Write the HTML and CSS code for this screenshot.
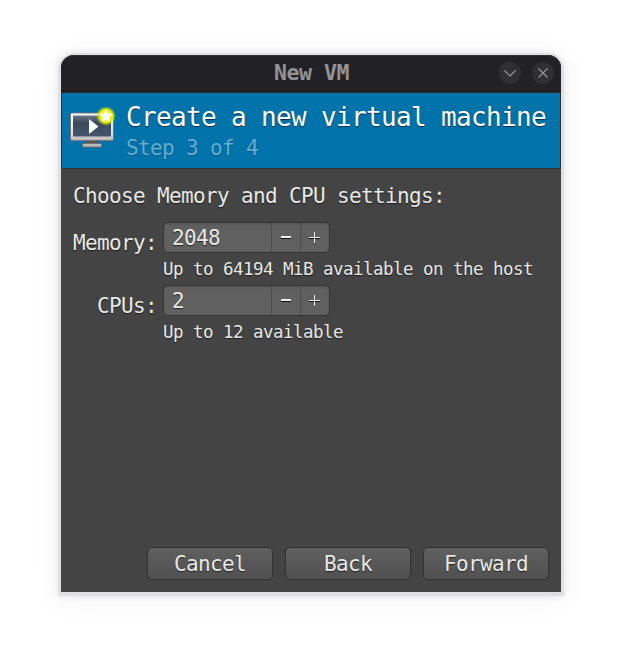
FILE: index.html
```html
<!DOCTYPE html>
<html lang="en">
<head>
<meta charset="utf-8">
<title>New VM</title>
<link rel="stylesheet" href="styles.css">
</head>
<body>
<main class="window">
  <header class="titlebar">
    <h1 class="window-title">New VM</h1>
    <div class="controls">
      <button class="control" aria-label="Minimize"><svg viewBox="0 0 22 22"><path d="M5.5 8.500 11 14l5.500-5.500"/></svg></button>
      <button class="control" aria-label="Close"><svg viewBox="0 0 22 22"><path d="m6.500 6.500 9 9m0-9-9 9"/></svg></button>
    </div>
  </header>
  <section class="banner">
    <svg class="vm-icon" viewBox="0 0 48 48">
      <defs>
        <linearGradient id="screen" x1="0" y1="0" x2="0" y2="1"><stop offset="0" stop-color="#6b7786"/><stop offset=".35" stop-color="#3b485b"/><stop offset="1" stop-color="#46546b"/></linearGradient>
        <linearGradient id="bezel" x1="0" y1="0" x2="0" y2="1"><stop offset="0" stop-color="#fff"/><stop offset=".8" stop-color="#ddd"/><stop offset="1" stop-color="#b5b5b5"/></linearGradient>
        <radialGradient id="glow"><stop offset="0" stop-color="#fffb50"/><stop offset=".65" stop-color="#e8f000"/><stop offset="1" stop-color="#c4e000" stop-opacity="0"/></radialGradient>
      </defs>
      <path d="M18 34h12v4H18z" fill="#555"/>
      <rect x="14.500" y="36.500" width="19" height="3.500" rx="1" fill="#bbb" stroke="#77706c"/>
      <rect x="2.500" y="6" width="43" height="27.500" rx="1.500" fill="url(#bezel)" stroke="#77777a"/>
      <rect x="5" y="8.500" width="38" height="21" fill="url(#screen)"/>
      <path d="M21 12v15l9.500-7.500z" fill="#fff"/>
      <circle cx="38" cy="9" r="10" fill="url(#glow)"/>
      <path d="m38 2 2 4.300 4.800.600-3.500 3.300.900 4.800-4.200-2.300-4.200 2.300.900-4.800-3.500-3.300 4.800-.600z" fill="#fff"/>
    </svg>
    <div>
      <h2 class="heading">Create a new virtual machine</h2>
      <p class="step">Step 3 of 4</p>
    </div>
  </section>
  <section class="content">
    <p class="prompt">Choose Memory and CPU settings:</p>
    <div class="fields">
      <label class="label">Memory:</label>
      <div class="spin"><span class="value">2048</span><button class="minus" aria-label="Decrease"><svg viewBox="0 0 28 29"><path class="shade" d="M9 15.500h10"/><path class="line thick" d="M9 14h10"/></svg></button><button aria-label="Increase"><svg viewBox="0 0 28 29"><path class="shade" d="M8 15.500h11m-5.500-5v10"/><path class="line" d="M8 14.500h11m-5.500-5.500v11"/></svg></button></div>
      <p class="hint">Up to 64194 MiB available on the host</p>
      <label class="label">CPUs:</label>
      <div class="spin"><span class="value">2</span><button class="minus" aria-label="Decrease"><svg viewBox="0 0 28 29"><path class="shade" d="M9 15.500h10"/><path class="line thick" d="M9 14h10"/></svg></button><button aria-label="Increase"><svg viewBox="0 0 28 29"><path class="shade" d="M8 15.500h11m-5.500-5v10"/><path class="line" d="M8 14.500h11m-5.500-5.500v11"/></svg></button></div>
      <p class="hint">Up to 12 available</p>
    </div>
    <footer class="actions">
      <button class="button">Cancel</button>
      <button class="button">Back</button>
      <button class="button">Forward</button>
    </footer>
  </section>
</main>
</body>
</html>
```
FILE: styles.css
```css
* { box-sizing: border-box; }
body {
  margin: 0;
  height: 659px;
  padding: 55px 61px 67px;
  overflow: hidden;
  background: #fff;
  color: #e8e8e7;
  font: 21px/24px "DejaVu Sans Mono", monospace;
  letter-spacing: -.643px;
}
h1, h2, p { margin: 0; font-weight: normal; }
button {
  margin: 0;
  padding: 0;
  border: 0;
  color: inherit;
  background: none;
  font: inherit;
  letter-spacing: inherit;
}
svg { display: block; }
.window {
  display: flex;
  flex-direction: column;
  width: 500px;
  height: 537px;
  border-radius: 14px 14px 0 0;
  background: #444;
  box-shadow: 0 1px 0 3px #e0dfe1, 0 1px 8px 3px rgba(0, 0, 0, .09), 0 4px 30px 4px rgba(0, 0, 0, .045);
}
.titlebar {
  display: grid;
  grid-template-columns: 1fr auto 1fr;
  align-items: center;
  height: 38px;
  padding: 0 7px 2px;
  border-bottom: 1px solid #303032;
  border-radius: 13px 13px 0 0;
  background: #222226;
  box-shadow: inset 0 1px #303336, inset 0 -1px #17171a;
}
.window-title {
  grid-column: 2;
  padding-left: 1px;
  color: #929294;
  font-size: 21.500px;
  font-weight: bold;
  letter-spacing: -.444px;
}
.controls { display: flex; justify-content: flex-end; gap: 11px; }
.control { width: 22px; height: 22px; border-radius: 50%; background: #303034; }
.control path { fill: none; stroke: #969698; stroke-width: 1.200; }
.banner {
  display: flex;
  height: 76px;
  margin: 0;
  padding: 9px 0 0 6px;
  border: solid #303234;
  border-width: 0 1px 1px;
  background: #0073aa;
  text-shadow: 0 1px 1px rgba(0, 0, 0, .6);
}
.vm-icon { width: 48px; height: 48px; margin: 5px 10px 0 0; }
.heading { color: #fff; font-size: 26px; line-height: 30px; letter-spacing: -.653px; white-space: nowrap; }
.step { margin-top: 3px; color: #66abd2; line-height: 26px; text-shadow: 0 1px 1px rgba(0, 0, 0, .2); }
.content {
  display: flex;
  flex: 1;
  flex-direction: column;
  padding: 15px 12px 12px;
  text-shadow: 0 1px 1px rgba(0, 0, 0, .6);
}
.prompt { white-space: nowrap; }
.fields {
  display: grid;
  grid-template-columns: 84px 1fr;
  grid-template-rows: 31px 32px 31px 32px;
  column-gap: 6px;
  margin-top: 14px;
}
.label { padding-top: 9px; text-align: right; white-space: nowrap; }
.hint { grid-column: 2; padding-top: 4px; font-size: 17.500px; letter-spacing: -.536px; white-space: nowrap; }
.spin {
  display: flex;
  width: 167px;
  height: 31px;
  border: 1px solid #333;
  border-radius: 5px;
  background: #606060;
  box-shadow: inset 0 2px 2px rgba(0, 0, 0, .08);
}
.spin .value { flex: 1; padding: 3px 0 0 8px; }
.spin button { width: 29px; border-left: 1px solid #4b4b4b; }
.spin svg { width: 28px; height: 29px; }
.shade { fill: none; stroke: #111; }
.line { fill: none; stroke: #eee; }
.thick { stroke-width: 2; }
.actions { display: flex; justify-content: flex-end; gap: 12px; margin-top: auto; }
.button {
  width: 126px;
  height: 33px;
  border: 1px solid #313131;
  border-radius: 5px;
  background: linear-gradient(#606060, #505050);
  text-shadow: inherit;
}
```
